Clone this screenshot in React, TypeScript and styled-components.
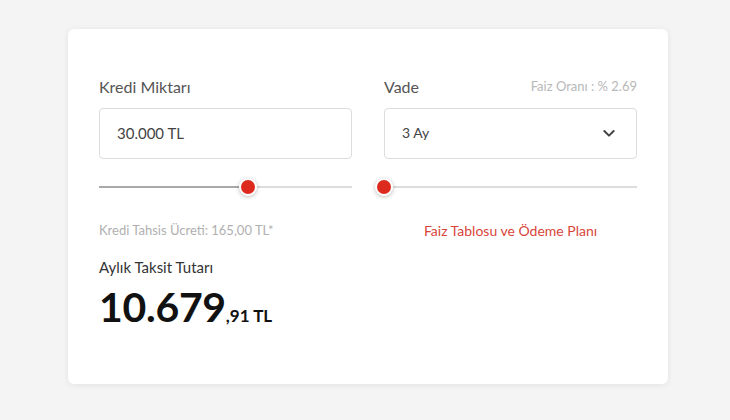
import { createGlobalStyle, styled } from 'styled-components';

const GlobalStyle = createGlobalStyle`
    html, body {
        margin: 0;
        padding: 0;
        background: #f4f4f4;
        font-family: Lato, 'Open Sans', sans-serif;
    }
`;

const Page = styled.div`
    width: 730px;
    height: 420px;
    padding-top: 29px;
    box-sizing: border-box;
    display: flex;
    justify-content: center;
    padding-left: 6px;
`;

const Card = styled.div`
    width: 600px;
    height: 355px;
    box-sizing: border-box;
    background: #fff;
    border-radius: 6px;
    box-shadow: 0 1px 6px rgba(0, 0, 0, 0.08);
    padding: 44px 32px 0 31px;
`;

const Grid = styled.div`
    display: grid;
    grid-template-columns: 253px 253px;
    column-gap: 32px;
`;

const Column = styled.div`
    display: flex;
    flex-direction: column;
`;

const LabelRow = styled.div`
    display: flex;
    justify-content: space-between;
    align-items: baseline;
    height: 26px;
    margin-bottom: 9px;
`;

const Label = styled.span`
    font-size: 16px;
    color: #555;
    padding-top: 4px;
`;

const Rate = styled.span`
    font-size: 13px;
    color: #b8b8b8;
    transform: translateY(-2px);
`;

const Field = styled.div`
    height: 51px;
    box-sizing: border-box;
    border: 1px solid #dcdcdc;
    border-radius: 4px;
    display: flex;
    align-items: center;
    justify-content: space-between;
    padding: 0 19px 2px 17px;
    font-size: ${({ $small }: { $small?: boolean }) => ($small ? '14px' : '15px')};
    color: #444;
`;

const SliderWrap = styled.div`
    position: relative;
    height: 20px;
    margin-top: 18px;
`;

const Track = styled.div`
    position: absolute;
    left: 0;
    right: 0;
    top: 9px;
    height: 2px;
    background: #dddddd;
`;

const Fill = styled.div`
    position: absolute;
    left: 0;
    top: 9px;
    height: 2px;
    background: #a9a9a9;
`;

const Thumb = styled.div`
    position: absolute;
    top: 1px;
    width: 18px;
    height: 18px;
    margin-left: -9px;
    box-sizing: border-box;
    border-radius: 50%;
    background: #dc2a1e;
    border: 2px solid #fff;
    box-shadow: 0 1px 4px rgba(0, 0, 0, 0.25);
`;

const Note = styled.div`
    margin-top: 25px;
    font-size: 13px;
    color: #b0b0b0;
`;

const Link = styled.a`
    margin-top: 25px;
    font-size: 14px;
    color: #d8453a;
    text-align: center;
    text-decoration: none;
`;

const Caption = styled.div`
    margin-top: 19px;
    font-size: 15px;
    color: #333;
`;

const Amount = styled.div`
    margin-top: 6px;
    font-weight: 700;
    color: #111;
    font-size: 41px;
    letter-spacing: -0.3px;
`;

const Cents = styled.span`
    font-size: 17px;
    letter-spacing: 0;
`;

const Slider = ({ value }: { value: number }) => (
    <SliderWrap>
        <Track />
        <Fill style={{ width: `${value * 100}%` }} />
        <Thumb style={{ left: `${value * 100}%` }} />
    </SliderWrap>
);

const Chevron = () => (
    <svg width="16" height="16" viewBox="0 0 24 24" fill="none" stroke="#444" strokeWidth="3" strokeLinecap="round" strokeLinejoin="round">
        <path d="M5 9l7 7 7-7" />
    </svg>
);

export default function App() {
    return (
        <>
            <GlobalStyle />
            <Page>
                <Card>
                    <Grid>
                        <Column>
                            <LabelRow>
                                <Label>Kredi Miktarı</Label>
                            </LabelRow>
                            <Field>30.000 TL</Field>
                            <Slider value={0.59} />
                            <Note>Kredi Tahsis Ücreti: 165,00 TL*</Note>
                        </Column>
                        <Column>
                            <LabelRow>
                                <Label>Vade</Label>
                                <Rate>Faiz Oranı : % 2.69</Rate>
                            </LabelRow>
                            <Field $small>
                                3 Ay
                                <Chevron />
                            </Field>
                            <Slider value={0} />
                            <Link href="#">Faiz Tablosu ve Ödeme Planı</Link>
                        </Column>
                    </Grid>
                    <Caption>Aylık Taksit Tutarı</Caption>
                    <Amount>
                        10.679<Cents>,91 TL</Cents>
                    </Amount>
                </Card>
            </Page>
        </>
    );
}
